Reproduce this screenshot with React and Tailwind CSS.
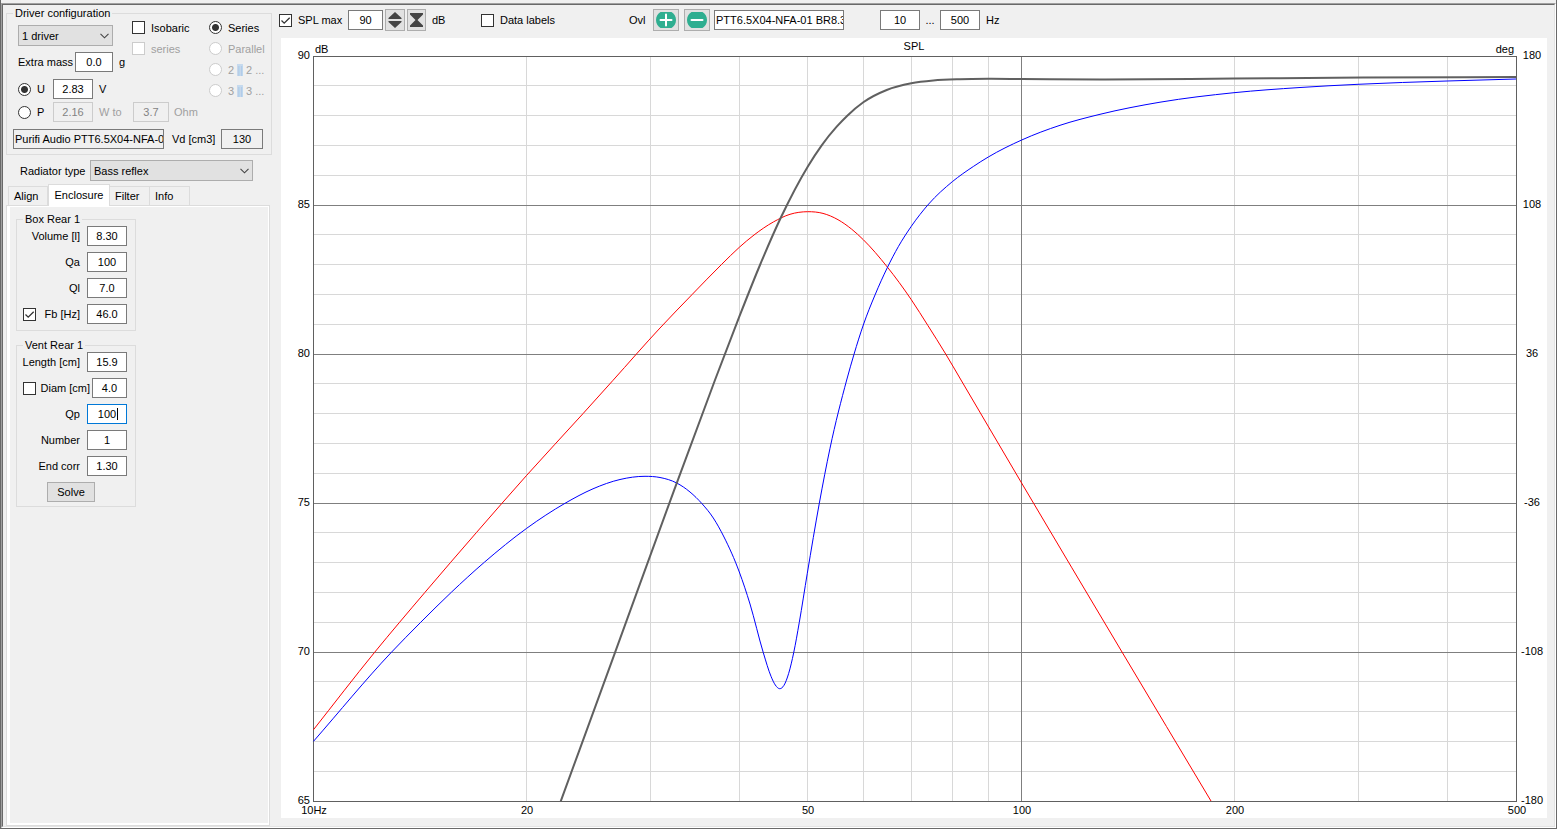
import { useState } from 'react'

const DB_MIN = 65
const DB_MAX = 90
const PLOT_W = 1203
const PLOT_H = 745

const freqX = f => Math.floor((Math.log10(f / 10) / Math.log10(50)) * PLOT_W)
const dbY = db => Math.floor(((DB_MAX - db) / (DB_MAX - DB_MIN)) * PLOT_H)

const minorFreqs = [20, 30, 40, 50, 60, 70, 80, 90, 200, 300, 400]
const freqLabels = [10, 20, 50, 100, 200, 500]
const dbLabels = [90, 85, 80, 75, 70, 65]
const degLabels = [180, 108, 36, -36, -108, -180]

// Curve samples, in plot coordinates
const splCurve = [
  [247.7, 745.3], [302, 596.7], [356.3, 447.3], [402, 324], [426.3, 260.7], [447, 209],
  [468, 161.3], [494.7, 110.7], [508.7, 89.3], [523.7, 70.7], [534.3, 59.7], [550.3, 46.3], [573.7, 34],
  [598.3, 27.3], [620.3, 24.5], [647, 23.2], [675, 22.8], [708.7, 23], [787, 23.5], [921, 22.5],
  [1050, 21.5], [1203, 21],
]

const ventCurve = [
  [0.5, 673.7], [61.3, 596.7], [112, 536.3], [163.3, 476.7], [213.7, 419.3], [270.3, 357.3], [299.7, 324.7],
  [347, 272], [379.3, 238.3], [408.7, 208.3], [426.3, 191.3], [441, 179], [460.3, 166], [477, 158.3],
  [494.7, 155.7], [510, 157.4], [525, 163.7], [538.7, 173.2], [550.3, 183.7], [574.3, 211], [598.3, 243.7],
  [615, 269.7], [632.7, 298], [648, 324], [708, 426], [809, 596], [898, 745],
]

const driverCurve = [
  [0.5, 685.3], [78, 596.7], [107.7, 566.3], [138.3, 536.3], [171.3, 506.3], [213.7, 472.3], [252, 447.3],
  [280, 432.8], [307, 423.5], [332, 420.3], [347, 421.5], [363.7, 427], [377, 436], [389, 447.7],
  [400.3, 462], [411, 481], [426.3, 516], [437, 548], [450.3, 596.7], [458, 620.3], [462.3, 629],
  [466.7, 632.7], [471, 629.3], [475.7, 617.3], [480.7, 596.7], [486.3, 566.3], [494.3, 517.3],
  [506.3, 447.3], [517, 392.3], [533.7, 324], [541, 298.3], [550.3, 269], [562, 239], [574.3, 211.7],
  [585.3, 190.7], [598.3, 170.3], [615.7, 148], [639.3, 125.7], [660.3, 110.5], [675.3, 101], [708.7, 84],
  [747, 69.3], [787, 58.3], [847, 46.2], [921, 36.7], [987, 31.5], [1045, 28.3], [1134, 25], [1203, 23],
]

const slope = (a, b) => (b[1] - a[1]) / (b[0] - a[0])

// Smooth path through all points, tangents weighted by the spacing of the samples
const toPath = pts => {
  const tangents = pts.map((p, i) => {
    if (i === 0) return slope(p, pts[1])
    if (i === pts.length - 1) return slope(pts[i - 1], p)
    const before = p[0] - pts[i - 1][0]
    const after = pts[i + 1][0] - p[0]
    return (slope(pts[i - 1], p) * after + slope(p, pts[i + 1]) * before) / (before + after)
  })
  let d = `M${pts[0][0]} ${pts[0][1]}`
  for (let i = 0; i < pts.length - 1; i++) {
    const [x1, y1] = pts[i]
    const [x2, y2] = pts[i + 1]
    const h = (x2 - x1) / 3
    d += ` C${x1 + h} ${y1 + tangents[i] * h} ${x2 - h} ${y2 - tangents[i + 1] * h} ${x2} ${y2}`
  }
  return d
}

const Chart = () => (
  <svg viewBox="0 0 1266 780" className="block w-full h-auto bg-white text-[11px]" role="img" aria-label="SPL">
    <g transform="translate(32 18)">
      <g stroke="#d8d8d8" shapeRendering="crispEdges">
        {Array.from({ length: 24 }, (_, i) => DB_MAX - 1 - i).map(db => (
          <line key={db} x1="0" x2={PLOT_W} y1={dbY(db) + 0.5} y2={dbY(db) + 0.5} />
        ))}
        {minorFreqs.map(f => (
          <line key={f} x1={freqX(f) + 0.5} x2={freqX(f) + 0.5} y1="0" y2={PLOT_H} />
        ))}
      </g>
      <g stroke="#7f7f7f" shapeRendering="crispEdges">
        {[85, 80, 75, 70].map(db => (
          <line key={db} x1="0" x2={PLOT_W} y1={dbY(db) + 0.5} y2={dbY(db) + 0.5} />
        ))}
        <line x1={freqX(100) + 0.5} x2={freqX(100) + 0.5} y1="0" y2={PLOT_H} />
      </g>
      <rect x="0.5" y="0.5" width={PLOT_W} height={PLOT_H} fill="none" stroke="#606060" shapeRendering="crispEdges" />
      <g fill="none">
        <path d={toPath(ventCurve)} stroke="#ff0000" />
        <path d={toPath(driverCurve)} stroke="#0000ff" />
        <path d={toPath(splCurve)} stroke="#606060" strokeWidth="2" />
      </g>

      <g textAnchor="end">
        {dbLabels.map(db => (
          <text key={db} x="-3" y={dbY(db) + 3}>{db}</text>
        ))}
        <text x="1201" y="-3">deg</text>
      </g>
      <g textAnchor="middle">
        {degLabels.map((deg, i) => (
          <text key={deg} x="1219" y={dbY(dbLabels[i]) + 3}>{deg}</text>
        ))}
        {freqLabels.map(f => (
          <text key={f} x={freqX(f) + 1} y="758">{f === 10 ? '10Hz' : f}</text>
        ))}
        <text x="601" y="-6">SPL</text>
      </g>
      <text x="2" y="-3">dB</text>
    </g>
  </svg>
)

const NumberBox = ({ id, label, value, width = 'w-10', focused, ...rest }) => {
  const [text, setText] = useState(value)
  return (
    <span className={`grid shrink-0 ${width}`}>
      <input
        id={id}
        aria-label={label}
        value={text}
        onChange={e => setText(e.target.value)}
        className={`[grid-area:1/1] w-full h-5 border bg-white text-center outline-none read-only:bg-[#f0f0f0] disabled:bg-[#f0f0f0] disabled:border-[#cccccc] disabled:text-[#838383] ${
          focused ? 'border-[#0078d7]' : 'border-[#7a7a7a]'
        }`}
        {...rest}
      />
      {focused && <span className="[grid-area:1/1] place-self-center w-px h-3 ml-5 bg-black"></span>}
    </span>
  )
}

const Check = ({ label, ariaLabel, checked, disabled, className = '' }) => (
  <label className={`flex items-center gap-1.5 h-[13px] whitespace-nowrap ${disabled ? 'text-[#a0a0a0]' : ''} ${className}`}>
    <span className="grid shrink-0">
      <input
        type="checkbox"
        aria-label={ariaLabel}
        defaultChecked={checked}
        disabled={disabled}
        className="peer [grid-area:1/1] appearance-none size-[13px] border border-[#333333] bg-white disabled:border-[#cccccc]"
      />
      <svg viewBox="0 0 13 13" className="[grid-area:1/1] size-[13px] hidden peer-checked:block pointer-events-none">
        <path d="M2.5 6.5 L5.2 9.2 L10.7 3.7" fill="none" stroke="#333333" strokeWidth="1.3" />
      </svg>
    </span>
    {label}
  </label>
)

const Radio = ({ name, checked, disabled, children }) => (
  <label className={`flex items-center gap-1.5 h-[13px] whitespace-nowrap ${disabled ? 'text-[#a0a0a0]' : ''}`}>
    <input
      type="radio"
      name={name}
      defaultChecked={checked}
      disabled={disabled}
      className="appearance-none shrink-0 size-[13px] rounded-full border border-[#333333] bg-white checked:bg-[radial-gradient(circle,#333333_3px,#ffffff_4px)] disabled:border-[#cccccc]"
    />
    <span>{children}</span>
  </label>
)

const Dropdown = ({ id, label, options, width }) => (
  <span className={`grid ${width}`}>
    <select
      id={id}
      aria-label={label}
      className="[grid-area:1/1] appearance-none w-full h-[21px] pl-[3px] border border-[#adadad] bg-[#e1e1e1] outline-none"
    >
      {options.map(o => <option key={o}>{o}</option>)}
    </select>
    <svg viewBox="0 0 9 6" className="[grid-area:1/1] self-center justify-self-end w-[9px] h-[6px] mr-1 pointer-events-none">
      <path d="M0.5 0.8 L4.5 4.8 L8.5 0.8" fill="none" stroke="#444444" strokeWidth="1.1" />
    </svg>
  </span>
)

const Group = ({ title, className = '', children }) => (
  <fieldset className={`min-w-0 border border-[#dcdcdc] pl-[6px] ${className}`}>
    <legend className="px-0.5 h-3.5 leading-[14px]">{title}</legend>
    {children}
  </fieldset>
)

const Field = ({ id, label, value, width, focused }) => (
  <div className="flex items-center justify-end gap-[7px]">
    <label htmlFor={id} className="whitespace-nowrap">{label}</label>
    <NumberBox id={id} value={value} width={width} focused={focused} />
  </div>
)

const Bars = () => <span className="text-[#a9c8e6] bg-[#c6daee]">||</span>

const DriverConfig = () => (
  <Group title="Driver configuration" className="pb-[5px] pr-2">
    <div className="flex">
      <div className="w-[196px] shrink-0 pl-[5px]">
        <div className="flex gap-[19px]">
          <div className="w-[95px] pt-[5px]">
            <Dropdown label="Drivers" options={['1 driver', '2 drivers', '4 drivers']} width="w-[95px]" />
            <div className="flex items-center justify-between mt-1.5">
              <label htmlFor="mass" className="whitespace-nowrap">Extra mass</label>
              <NumberBox id="mass" value="0.0" width="w-[38px]" />
            </div>
          </div>
          <div className="flex flex-col pt-px">
            <Check label="Isobaric" />
            <Check label="series" disabled className="mt-2" />
            <span className="-ml-[13px] leading-[14px]">g</span>
          </div>
        </div>
        <div className="flex items-center mt-[7px]">
          <div className="w-[35px]"><Radio name="source" checked>U</Radio></div>
          <NumberBox label="Voltage" value="2.83" />
          <span className="ml-1.5">V</span>
        </div>
        <div className="flex items-center mt-[3px] text-[#a0a0a0]">
          <div className="w-[35px] text-black"><Radio name="source">P</Radio></div>
          <NumberBox label="Power" value="2.16" disabled />
          <span className="w-10 pl-1.5 whitespace-nowrap">W to</span>
          <NumberBox label="Impedance" value="3.7" width="w-9" disabled />
          <span className="ml-[5px]">Ohm</span>
        </div>
      </div>
      <div className="flex flex-col gap-2 pt-px">
        <Radio name="wiring" checked>Series</Radio>
        <Radio name="wiring" disabled>Parallel</Radio>
        <Radio name="wiring" disabled>2 <Bars /> 2 ...</Radio>
        <Radio name="wiring" disabled>3 <Bars /> 3 ...</Radio>
      </div>
    </div>
    <div className="flex items-center mt-[7px]">
      <input
        aria-label="Driver name"
        readOnly
        value="Purifi Audio PTT6.5X04-NFA-0"
        className="w-[151px] h-5 pl-px border border-[#7a7a7a] outline-none"
      />
      <label htmlFor="vd" className="w-[57px] pl-2 whitespace-nowrap">Vd [cm3]</label>
      <NumberBox id="vd" value="130" width="w-[42px]" readOnly />
    </div>
  </Group>
)

const Tabs = () => (
  <div role="tablist" className="flex items-end pl-0.5 -mb-px relative">
    {['Align', 'Enclosure', 'Filter', 'Info'].map(name =>
      name === 'Enclosure' ? (
        <button key={name} role="tab" aria-selected="true" className="w-[62px] h-[22px] pb-0.5 bg-white border border-b-0 border-[#dcdcdc]">
          {name}
        </button>
      ) : (
        <button key={name} role="tab" aria-selected="false" className="w-10 h-5 pl-[5px] text-left border border-l-0 first:border-l border-[#dcdcdc]">
          {name}
        </button>
      )
    )}
  </div>
)

const Sidebar = () => (
  <aside className="flex flex-col w-[269px] shrink-0 pl-[3px] pt-px">
    <DriverConfig />
    <div className="flex items-center pl-3.5 mt-[5px]">
      <label htmlFor="radiator" className="w-[70px] whitespace-nowrap">Radiator type</label>
      <Dropdown id="radiator" options={['Bass reflex', 'Closed', 'Passive radiator']} width="w-[163px]" />
    </div>
    <div className="flex flex-col grow mt-[3px] mr-0.5">
      <Tabs />
      <div role="tabpanel" className="grow border border-[#dcdcdc] bg-white pl-[3px] pr-px pt-px pb-0.5 flex">
        <div className="grow bg-[#f0f0f0] pl-1.5 pt-[5px]">
          <Group title="Box Rear 1" className="w-[120px] pr-2 pb-1.5">
            <div className="flex flex-col gap-1.5">
              <Field id="volume" label="Volume [l]" value="8.30" />
              <Field id="qa" label="Qa" value="100" />
              <Field id="ql" label="Ql" value="7.0" />
              <div className="flex items-center justify-between">
                <Check ariaLabel="Lock Fb" checked />
                <Field id="fb" label="Fb [Hz]" value="46.0" />
              </div>
            </div>
          </Group>
          <Group title="Vent Rear 1" className="w-[120px] mt-[7px] pr-2 pb-1">
            <div className="flex flex-col gap-1.5">
              <Field id="length" label="Length [cm]" value="15.9" />
              <div className="flex items-center justify-between">
                <Check ariaLabel="Lock diameter" />
                <div className="flex items-center gap-0.5">
                  <label htmlFor="diam" className="whitespace-nowrap">Diam [cm]</label>
                  <NumberBox id="diam" value="4.0" width="w-[35px]" />
                </div>
              </div>
              <Field id="qp" label="Qp" value="100" focused />
              <Field id="number" label="Number" value="1" />
              <Field id="endcorr" label="End corr" value="1.30" />
              <button className="w-12 h-5 ml-6 border border-[#adadad] bg-[#e1e1e1] leading-none">Solve</button>
            </div>
          </Group>
        </div>
      </div>
    </div>
  </aside>
)

const ToolButton = ({ label, width, children }) => (
  <button aria-label={label} className={`flex items-center justify-center h-[22px] border border-[#adadad] bg-[#e1e1e1] ${width}`}>
    {children}
  </button>
)

const OverlayIcon = ({ plus }) => (
  <svg viewBox="0 0 20 16" className="w-5 h-4">
    <path d="M4.5 0 H15.5 C18.2 1.6 20 4.6 20 8 C20 11.4 18.2 14.4 15.5 16 H4.5 C1.8 14.4 0 11.4 0 8 C0 4.6 1.8 1.6 4.5 0 Z" fill="#2eae90" />
    <path d={plus ? 'M4.5 8 H15.5 M10 2.5 V13.5' : 'M4.5 8 H15.5'} stroke="#ffffff" strokeWidth="2" strokeLinecap="round" />
  </svg>
)

const Toolbar = () => (
  <div className="flex items-center h-[33px] pl-[7px] pb-[3px] whitespace-nowrap">
    <Check label="SPL max" checked className="w-[69px]" />
    <NumberBox label="SPL max value" value="90" width="w-[35px]" />
    <div className="flex gap-0.5 ml-0.5">
      <ToolButton label="Step SPL max" width="w-5">
        <svg viewBox="0 0 14 16" className="w-3.5 h-4" fill="#444444">
          <path d="M7 0 L13.5 6 V7 H0.5 V6 Z M0.5 9 H13.5 V10 L7 16 L0.5 10 Z" />
        </svg>
      </ToolButton>
      <ToolButton label="Fit SPL range" width="w-[19px]">
        <svg viewBox="0 0 13 16" className="w-[13px] h-4" fill="#444444">
          <path d="M0 1 H13 V2.5 L7.5 8 L13 13.5 V15 H0 V13.5 L5.5 8 L0 2.5 Z" />
        </svg>
      </ToolButton>
    </div>
    <span className="w-[55px] pl-1.5">dB</span>
    <Check label="Data labels" className="w-[148px]" />
    <span className="w-6">Ovl</span>
    <div className="flex gap-[5px]">
      <ToolButton label="Add overlay" width="w-[26px]"><OverlayIcon plus /></ToolButton>
      <ToolButton label="Remove overlay" width="w-[26px]"><OverlayIcon /></ToolButton>
    </div>
    <input
      aria-label="Overlay name"
      defaultValue="PTT6.5X04-NFA-01 BR8.30"
      className="w-[130px] h-5 ml-1 mr-9 pl-px border border-[#7a7a7a] bg-white outline-none"
    />
    <NumberBox label="Lowest frequency" value="10" />
    <span className="w-5 text-center">...</span>
    <NumberBox label="Highest frequency" value="500" />
    <span className="ml-1.5">Hz</span>
  </div>
)

export default function App() {
  return (
    <div className="flex flex-col min-h-screen bg-[#f0f0f0] pt-[3px] border-x border-b border-[#696969] font-['Liberation_Sans',Arial,sans-serif] text-[11px] leading-4 text-black">
      <div className="flex grow border-t border-l border-[#a0a0a0] border-b border-b-white border-r border-r-white">
        <div className="flex grow min-w-0 border-t border-l border-[#696969] border-b border-b-[#e3e3e3] border-r border-r-[#e3e3e3]">
          <Sidebar />
          <main className="flex flex-col grow min-w-0">
            <Toolbar />
            <div className="pl-[9px] pr-[7px]">
              <Chart />
            </div>
          </main>
        </div>
      </div>
    </div>
  )
}
